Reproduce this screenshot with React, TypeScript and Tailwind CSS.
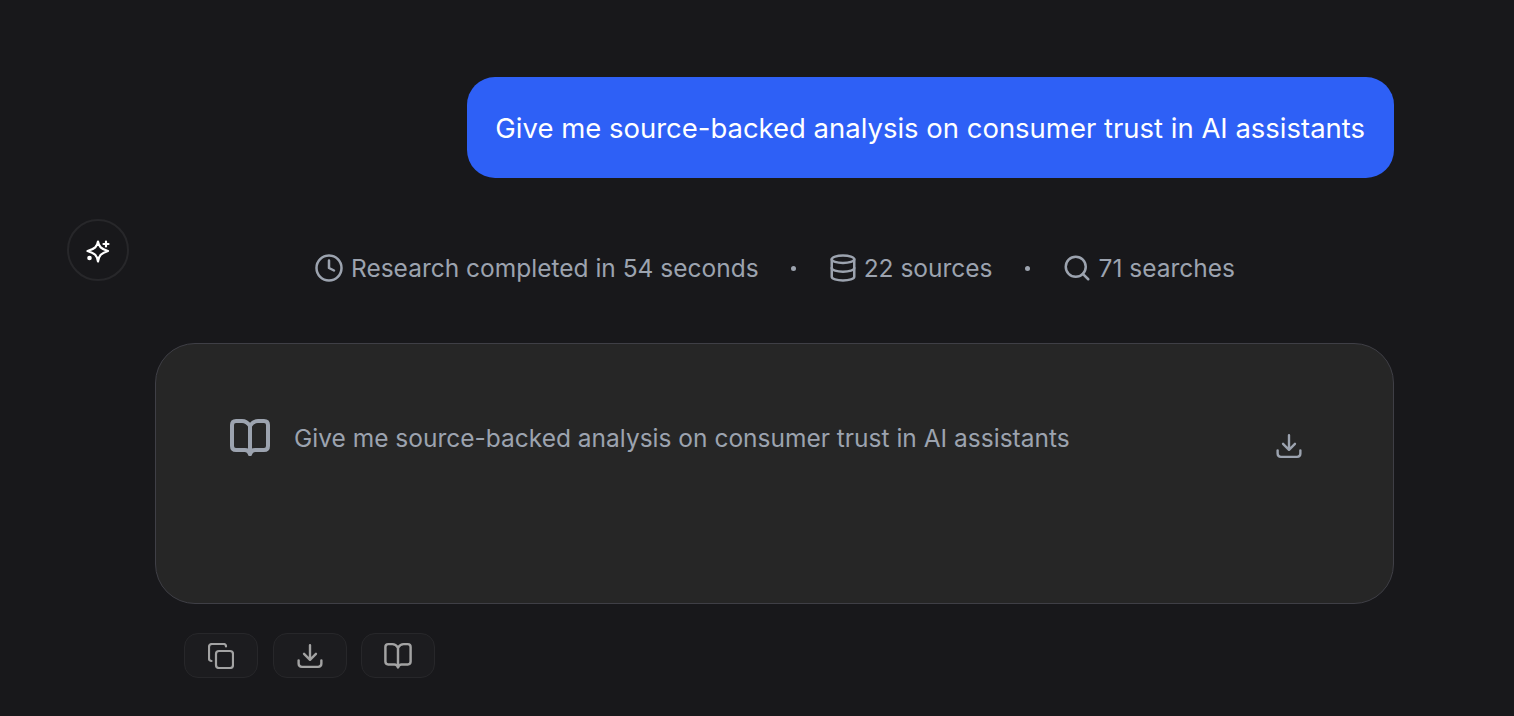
import { Clock, Database, Search } from "lucide-react";

const Sparkle = () => (
  <svg width="28" height="28" viewBox="0 0 28 28" fill="none" stroke="#ffffff" strokeWidth="2.2" strokeLinejoin="round" strokeLinecap="round">
    <path d="M14 5.500 C14.800 10.500 17 13 24 15 C17 17.200 15 19.500 14 25.500 C13 19.500 11 17.200 3.500 15 C11 13 13.200 10.500 14 5.500 Z" />
    <path d="M22 5.500v5M19.500 8h5" />
    <circle cx="5.500" cy="22" r="1.200" fill="#ffffff" />
  </svg>
);

const Book = ({ size, width }: { size: number; width: number }) => (
  <svg width={size} height={size} viewBox="0 0 40 40" fill="none" stroke="currentColor" strokeWidth={width} strokeLinejoin="round" strokeLinecap="round">
    <path d="M20 8 C18 5 15.500 3 12 3 H6 C3.500 3 2 4.500 2 7 V28 C2 30.500 3.500 32 6 32 H15 C17.500 32 19 33 20 36 C21 33 22.500 32 25 32 H34 C36.500 32 38 30.500 38 28 V7 C38 4.500 36.500 3 34 3 H28 C24.500 3 22 5 20 8 Z" />
    <path d="M20 8 V36" />
  </svg>
);

const Download = ({ size }: { size: number }) => (
  <svg width={size} height={size} viewBox="0 0 24 24" fill="none" stroke="currentColor" strokeWidth="2.200" strokeLinecap="round" strokeLinejoin="round">
    <path d="M12 2v13M6.500 10l5.500 5.500 5.500-5.500" />
    <path d="M1.500 16v3c0 1.700 1.300 3 3 3h15c1.700 0 3-1.300 3-3v-3" />
  </svg>
);

const CopyIcon = () => (
  <svg width="26" height="26" viewBox="0 0 26 26" fill="none" stroke="currentColor" strokeWidth="2.200" strokeLinecap="round" strokeLinejoin="round">
    <rect x="8" y="8" width="17" height="17" rx="3" />
    <path d="M3.500 18C2 18 1 17 1 15.500V4C1 2.300 2.300 1 4 1h11.500C17 1 18 2 18 3.500" />
  </svg>
);

const Dot = () => <span className="block ml-[32.5px] mr-[30.5px] w-[5px] h-[5px] rounded-full bg-[#9ca3af]" />;

const ActionButton = ({ children }: { children: React.ReactNode }) => (
  <button className="w-[74px] h-[45px] flex items-center justify-center rounded-[14px] border border-[#27272a] bg-[#1c1c1f] text-[#a3a3a3]">
    {children}
  </button>
);

export default function App() {
  return (
    <div className="h-[716px] overflow-hidden bg-[#18181b] pt-[77px] pr-[120px] flex flex-col font-['Inter',sans-serif]">
      <div className="self-end h-[101px] pl-[28px] pr-[29px] pt-[3px] flex items-center rounded-[28px] bg-[#2e60f6] text-white text-[27.47px] whitespace-nowrap">
        Give me source-backed analysis on consumer trust in AI assistants
      </div>

      <div className="flex mt-[41px] pl-[67px]">
        <div className="w-[62px] h-[62px] shrink-0 flex items-center justify-center rounded-full border-2 border-[#27272a]">
          <Sparkle />
        </div>

        <div className="ml-[26px] flex-1 flex flex-col">
          <div className="mt-[31px] h-[36px] pr-[1px] flex items-center justify-center text-[24.5px] text-[#9ca3af]">
            <Clock size={30} strokeWidth={2} className="ml-[1px]" />
            <span className="ml-[7px]">Research completed in 54 seconds</span>
            <Dot />
            <Database size={30} strokeWidth={2} className="ml-[1px]" />
            <span className="ml-[6px]">22 sources</span>
            <Dot />
            <Search size={30} strokeWidth={2} className="ml-[1px]" />
            <span className="ml-[7px]">71 searches</span>
          </div>

          <div className="mt-[57px] h-[261px] flex items-start rounded-[40px] border border-[#3f3f46] bg-[#262626] pl-[74px] pr-[91px] pt-[74px] text-[#9ca3af]">
            <Book size={40} width={4} />
            <span className="ml-[24px] text-[24.5px] leading-[46px] -mt-[3px]">Give me source-backed analysis on consumer trust in AI assistants</span>
            <span className="ml-auto mt-[15px]"><Download size={26} /></span>
          </div>

          <div className="mt-[29px] ml-[29px] flex gap-[14.5px]">
            <ActionButton><CopyIcon /></ActionButton>
            <ActionButton><Download size={26} /></ActionButton>
            <ActionButton><Book size={28} width={3.500} /></ActionButton>
          </div>
        </div>
      </div>
    </div>
  );
}
